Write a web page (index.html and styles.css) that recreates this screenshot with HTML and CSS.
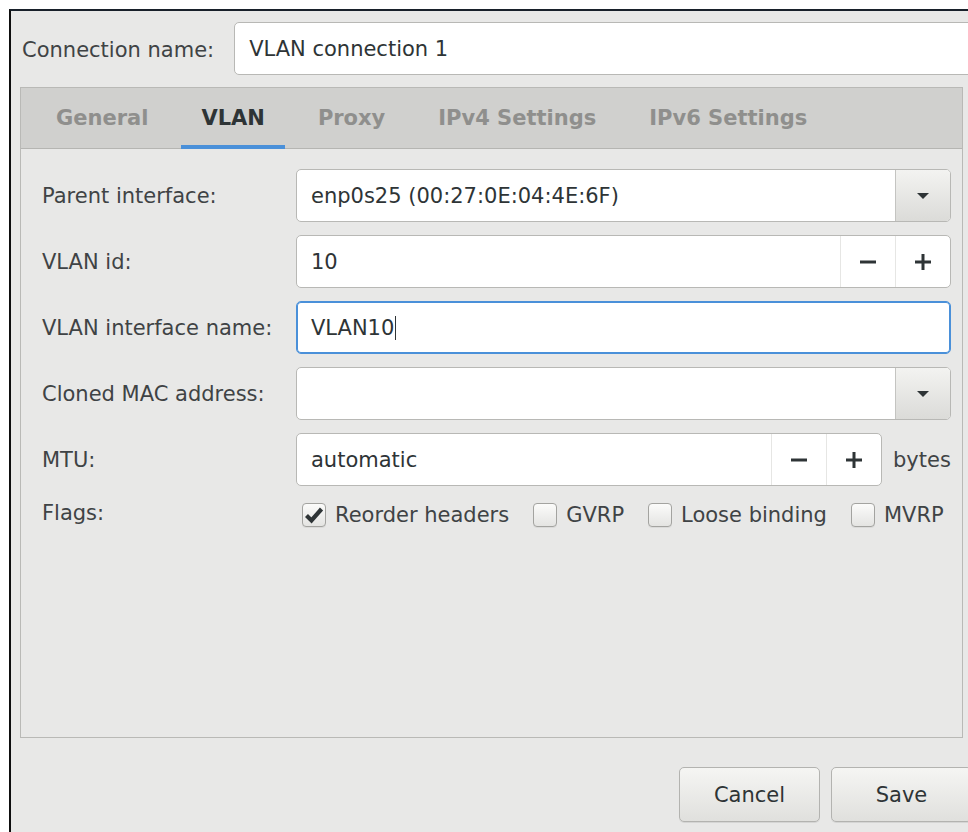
FILE: index.html
```html
<!DOCTYPE html>
<html lang="en">
<head>
<meta charset="utf-8">
<title>Editing VLAN connection 1</title>
<link rel="stylesheet" href="styles.css">
</head>
<body>
<div class="window">
  <div class="name-row">
    <span class="label">Connection name:</span>
    <div class="entry name-entry"><span class="value">VLAN connection 1</span></div>
  </div>

  <div class="notebook">
    <div class="tabs">
      <div class="tab">General</div>
      <div class="tab active">VLAN</div>
      <div class="tab">Proxy</div>
      <div class="tab">IPv4 Settings</div>
      <div class="tab">IPv6 Settings</div>
    </div>

    <div class="page">
      <div class="form">
        <span class="label">Parent interface:</span>
        <div class="entry combo">
          <span class="value">enp0s25 (00:27:0E:04:4E:6F)</span>
          <span class="drop"><svg width="14" height="8" viewBox="0 0 14 8"><path d="M1 1h12L7 7z" fill="#2e3436"/></svg></span>
        </div>

        <span class="label">VLAN id:</span>
        <div class="entry spin">
          <span class="value">10</span>
          <span class="step"><svg width="18" height="18" viewBox="0 0 18 18"><path d="M1 9h16" stroke="#2e3436" stroke-width="3"/></svg></span>
          <span class="step"><svg width="18" height="18" viewBox="0 0 18 18"><path d="M1 9h16M9 1v16" stroke="#2e3436" stroke-width="3"/></svg></span>
        </div>

        <span class="label">VLAN interface name:</span>
        <div class="entry focused"><span class="value">VLAN10<span class="caret"></span></span></div>

        <span class="label">Cloned MAC address:</span>
        <div class="entry combo">
          <span class="value"></span>
          <span class="drop"><svg width="14" height="8" viewBox="0 0 14 8"><path d="M1 1h12L7 7z" fill="#2e3436"/></svg></span>
        </div>

        <span class="label">MTU:</span>
        <div class="mtu">
          <div class="entry spin mtu-spin">
            <span class="value">automatic</span>
            <span class="step"><svg width="18" height="18" viewBox="0 0 18 18"><path d="M1 9h16" stroke="#2e3436" stroke-width="3"/></svg></span>
            <span class="step"><svg width="18" height="18" viewBox="0 0 18 18"><path d="M1 9h16M9 1v16" stroke="#2e3436" stroke-width="3"/></svg></span>
          </div>
          <span class="unit">bytes</span>
        </div>

        <span class="label flags-label">Flags:</span>
        <div class="flags">
          <label class="check"><span class="box checked"><svg class="tick" width="20" height="18" viewBox="0 0 20 18"><path d="M2.5 9.5l5 5L17.5 3" fill="none" stroke="#2e3436" stroke-width="4.2"/></svg></span>Reorder headers</label>
          <label class="check"><span class="box"></span>GVRP</label>
          <label class="check"><span class="box"></span>Loose binding</label>
          <label class="check"><span class="box"></span>MVRP</label>
        </div>
      </div>
    </div>
  </div>

  <div class="actions">
    <button class="btn">Cancel</button>
    <button class="btn">Save</button>
  </div>
</div>
</body>
</html>
```

FILE: styles.css
```css
html, body {
  margin: 0;
  height: 832px;
  overflow: hidden;
  background: #ffffff;
}

body {
  font-family: "DejaVu Sans", "Noto Sans", sans-serif;
  font-size: 21px;
  color: #2e3436;
}

.window {
  margin: 9px 0 0 9px;
  width: 992px;
  height: 823px;
  box-sizing: border-box;
  border-top: 2px solid #18202a;
  border-left: 2px solid #0e0e0e;
  background: #e8e8e7;
  display: flex;
  flex-direction: column;
}

.label {
  color: #3f4345;
  white-space: nowrap;
}

/* connection name header */
.name-row {
  display: flex;
  align-items: center;
  gap: 20px;
  padding: 11px 0 0 11px;
}

.name-row .label {
  padding-top: 2px;
}

.entry {
  box-sizing: border-box;
  height: 53px;
  background: #ffffff;
  border: 1px solid #b8b8b5;
  border-radius: 5px;
  display: flex;
  align-items: center;
  color: #2e3436;
}

.entry .value {
  flex: 1;
  padding-left: 14px;
  white-space: nowrap;
}

.name-entry {
  flex: 1;
}

/* notebook */
.notebook {
  margin: 12px 0 0 9px;
  width: 943px;
  height: 651px;
  box-sizing: border-box;
  border: 1px solid #b9b9b6;
  display: flex;
  flex-direction: column;
}

.tabs {
  height: 61px;
  box-sizing: border-box;
  background: #d0d0ce;
  border-bottom: 1px solid #b5b5b2;
  display: flex;
  gap: 13px;
  padding-left: 15px;
}

.tab {
  padding: 2px 20px 0;
  display: flex;
  align-items: center;
  font-weight: bold;
  color: #8f8f8d;
  border-bottom: 4px solid transparent;
  margin-bottom: -1px;
}

.tab.active {
  color: #2e3436;
  border-bottom-color: #4a90d9;
}

.page {
  flex: 1;
  padding: 20px 12px 0 21px;
}

.form {
  display: grid;
  grid-template-columns: 254px 1fr;
  grid-auto-rows: 53px;
  row-gap: 13px;
  align-items: center;
}

.combo .drop {
  width: 54px;
  align-self: stretch;
  display: flex;
  align-items: center;
  justify-content: center;
  border-left: 1px solid #c4c4c1;
  border-radius: 0 4px 4px 0;
  background: linear-gradient(#f3f3f1, #dbdbd8);
}

.spin .step {
  width: 54px;
  align-self: stretch;
  display: flex;
  align-items: center;
  justify-content: center;
  border-left: 1px solid #e6e6e4;
}

.focused {
  border-color: #4a90d9;
  box-shadow: inset 0 0 0 1px #4a90d9;
}

.caret {
  display: inline-block;
  width: 1px;
  height: 24px;
  background: #2e3436;
  vertical-align: -5px;
  margin-left: 1px;
}

.mtu {
  display: flex;
  align-items: center;
  gap: 11px;
}

.mtu-spin {
  width: 586px;
}

.unit {
  color: #3f4345;
}

.flags-label,
.flags {
  align-self: start;
  height: 28px;
  display: flex;
  align-items: center;
}

.flags {
  gap: 24px;
  padding-left: 6px;
  padding-top: 2px;
}

.check {
  display: flex;
  align-items: center;
  gap: 9px;
  color: #3f4345;
  white-space: nowrap;
}

.box {
  flex: none;
  width: 24px;
  height: 24px;
  box-sizing: border-box;
  border: 1px solid #a3a3a0;
  border-radius: 4px;
  background: linear-gradient(#fbfbfa, #e4e4e2);
  box-shadow: 0 1px 0 rgba(0, 0, 0, 0.06);
  display: flex;
  align-items: center;
  justify-content: center;
}

.tick {
  flex: none;
}

/* dialog buttons */
.actions {
  display: flex;
  justify-content: flex-end;
  gap: 11px;
  padding: 29px 29px 0 0;
}

.btn {
  width: 141px;
  height: 55px;
  box-sizing: border-box;
  border: 1px solid #b3b3b0;
  border-radius: 5px;
  background: linear-gradient(#f5f5f3, #e0e0dd);
  box-shadow: 0 1px 0 rgba(0, 0, 0, 0.08);
  font-family: inherit;
  font-size: 21px;
  color: #2e3436;
}
```
